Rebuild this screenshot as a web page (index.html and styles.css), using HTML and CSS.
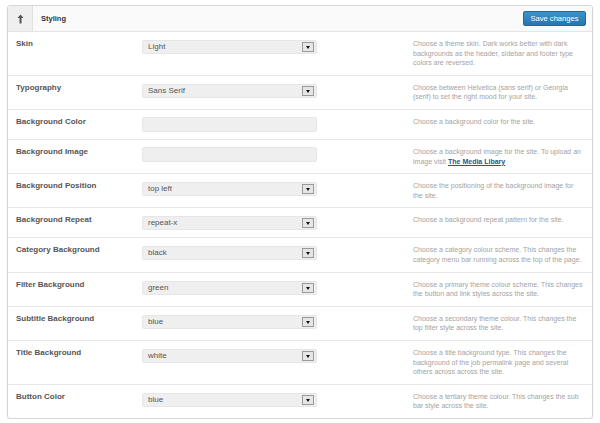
FILE: index.html
```html
<!DOCTYPE html>
<html>
<head>
<meta charset="utf-8">
<link rel="stylesheet" href="styles.css">
</head>
<body>
<div class="panel">
  <div class="head">
    <div class="toggle">
      <svg width="7" height="10" viewBox="0 0 7 10"><path d="M3.5 0.5 L6.5 4 L4.5 4 L4.5 9.5 L2.5 9.5 L2.5 4 L0.5 4 Z" fill="#555"/></svg>
    </div>
    <div class="title">Styling</div>
    <button class="save">Save changes</button>
  </div>

  <div class="row">
    <div class="label">Skin</div>
    <div class="ctl"><div class="select"><span>Light</span><i class="arrow"></i></div></div>
    <div class="desc">Choose a theme skin. Dark works better with dark backgrounds as the header, sidebar and footer type colors are reversed.</div>
  </div>
  <div class="row">
    <div class="label">Typography</div>
    <div class="ctl"><div class="select"><span>Sans Serif</span><i class="arrow"></i></div></div>
    <div class="desc">Choose between Helvetica (sans serif) or Georgia (serif) to set the right mood for your site.</div>
  </div>
  <div class="row">
    <div class="label">Background Color</div>
    <div class="ctl"><div class="input"></div></div>
    <div class="desc">Choose a background color for the site.</div>
  </div>
  <div class="row">
    <div class="label">Background Image</div>
    <div class="ctl"><div class="input"></div></div>
    <div class="desc">Choose a background image for the site. To upload an image visit <a href="#">The Media Libary</a></div>
  </div>
  <div class="row">
    <div class="label">Background Position</div>
    <div class="ctl"><div class="select"><span>top left</span><i class="arrow"></i></div></div>
    <div class="desc">Choose the positioning of the background image for the site.</div>
  </div>
  <div class="row">
    <div class="label">Background Repeat</div>
    <div class="ctl"><div class="select"><span>repeat-x</span><i class="arrow"></i></div></div>
    <div class="desc">Choose a background repeat pattern for the site.</div>
  </div>
  <div class="row">
    <div class="label">Category Background</div>
    <div class="ctl"><div class="select"><span>black</span><i class="arrow"></i></div></div>
    <div class="desc">Choose a category colour scheme. This changes the category menu bar running across the top of the page.</div>
  </div>
  <div class="row">
    <div class="label">Filter Background</div>
    <div class="ctl"><div class="select"><span>green</span><i class="arrow"></i></div></div>
    <div class="desc">Choose a primary theme colour scheme. This changes the button and link styles across the site.</div>
  </div>
  <div class="row">
    <div class="label">Subtitle Background</div>
    <div class="ctl"><div class="select"><span>blue</span><i class="arrow"></i></div></div>
    <div class="desc">Choose a secondary theme colour. This changes the top filter style across the site.</div>
  </div>
  <div class="row">
    <div class="label">Title Background</div>
    <div class="ctl"><div class="select"><span>white</span><i class="arrow"></i></div></div>
    <div class="desc">Choose a title background type. This changes the background of the job permalink page and several others across across the site.</div>
  </div>
  <div class="row last">
    <div class="label">Button Color</div>
    <div class="ctl"><div class="select"><span>blue</span><i class="arrow"></i></div></div>
    <div class="desc">Choose a tertiary theme colour. This changes the sub bar style across the site.</div>
  </div>
</div>
</body>
</html>
```
FILE: styles.css
```css
html, body {
  margin: 0;
  padding: 0;
  background: #fff;
}
body {
  font-family: "Liberation Sans", Arial, sans-serif;
  padding: 5px 7px 0 7px;
}
.panel {
  border: 1px solid #d6d6d6;
  border-radius: 3px;
  box-shadow: 0 1px 2px rgba(0,0,0,0.08);
  width: 584px;
  overflow: hidden;
}
.head {
  display: flex;
  align-items: center;
  height: 25px;
  background: #fafafa;
  border-bottom: 1px solid #e4e4e4;
}
.toggle {
  width: 24px;
  height: 25px;
  background: #efefef;
  border-right: 1px solid #e2e2e2;
  display: flex;
  align-items: center;
  justify-content: center;
}
.toggle svg { display: block; }
.title {
  flex: 1;
  font-size: 7.5px;
  font-weight: bold;
  color: #333;
  padding-left: 8px;
}
.save {
  margin-right: 6px;
  width: 63px;
  height: 15px;
  padding: 0;
  border: 1px solid #1f6a9b;
  border-radius: 2px;
  background: linear-gradient(#3a93cc, #2477ae);
  color: #fff;
  font-family: "Liberation Sans", Arial, sans-serif;
  font-size: 7.6px;
  line-height: 13px;
}
.row {
  display: grid;
  grid-template-columns: 126px 175px 1fr 170px;
  padding: 7px 9px 7px 8px;
  border-bottom: 1px solid #e8e8e8;
}
.row.last { border-bottom: none; }
.label {
  font-size: 8px;
  line-height: 10px;
  font-weight: bold;
  color: #555;
}
.ctl {
  grid-column: 2;
}
.desc {
  grid-column: 4;
  font-size: 7px;
  line-height: 9.6px;
  color: #a3a3a3;
}
.desc a {
  color: #21598a;
  font-weight: bold;
  text-decoration: underline;
}
.select {
  position: relative;
  margin-top: 1px;
  height: 14px;
  box-sizing: border-box;
  background: #efefef;
  border: 1px solid #e6e6e6;
  border-radius: 2px;
  font-size: 8px;
  line-height: 12px;
  color: #555;
  padding-left: 5px;
}
.arrow {
  position: absolute;
  right: 2px;
  top: 1px;
  width: 12px;
  height: 10px;
  box-sizing: border-box;
  border: 1px solid #9a9a9a;
  background: #e6e6e6;
}
.arrow::after {
  content: "";
  position: absolute;
  left: 2.5px;
  top: 3px;
  border-left: 2.5px solid transparent;
  border-right: 2.5px solid transparent;
  border-top: 3px solid #111;
}
.input {
  height: 15px;
  box-sizing: border-box;
  background: #efefef;
  border: 1px solid #e6e6e6;
  border-radius: 2px;
}
```
